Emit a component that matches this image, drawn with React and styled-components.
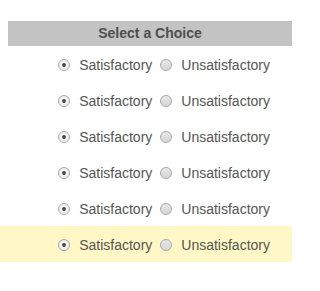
import React, { useState } from "react";
import styled, { createGlobalStyle } from "styled-components";

const GlobalStyle = createGlobalStyle`
  body {
    margin: 0;
    background: #ffffff;
    font-family: "Liberation Sans", Arial, sans-serif;
  }
  * {
    box-sizing: border-box;
  }
`;

const ROWS = [0, 1, 2, 3, 4, 5];

function App() {
  const [choices, setChoices] = useState(ROWS.map(() => "sat"));

  const pick = (i, value) =>
    setChoices((prev) => prev.map((c, j) => (j === i ? value : c)));

  return (
    <Page>
      <GlobalStyle />
      <Header>Select a Choice</Header>
      {ROWS.map((i) => (
        <Row key={i} highlighted={i === ROWS.length - 1}>
          <Option onClick={() => pick(i, "sat")}>
            <Radio checked={choices[i] === "sat"} />
            <Label>Satisfactory</Label>
          </Option>
          <Option onClick={() => pick(i, "unsat")}>
            <Radio checked={choices[i] === "unsat"} />
            <Label>Unsatisfactory</Label>
          </Option>
        </Row>
      ))}
    </Page>
  );
}

export default App;

const Page = styled.div`
  width: 292px;
  padding-top: 21px;
`;

const Header = styled.div`
  margin-left: 8px;
  height: 25px;
  line-height: 25px;
  background-color: #c3c3c3;
  color: #4f4f4f;
  font-size: 14px;
  font-weight: bold;
  text-align: center;
`;

const Row = styled.div.withConfig({
  shouldForwardProp: (prop) => prop !== "highlighted",
})`
  display: flex;
  align-items: center;
  justify-content: flex-end;
  gap: 8px;
  height: 36px;
  padding: 2px 22px 0 0;
  background-color: ${(p) => (p.highlighted ? "#fff8c6" : "transparent")};
`;

const Option = styled.label`
  display: flex;
  align-items: center;
  gap: 9px;
  cursor: pointer;
`;

const Radio = styled.span.withConfig({
  shouldForwardProp: (prop) => prop !== "checked",
})`
  position: relative;
  width: 12px;
  height: 12px;
  border-radius: 50%;
  border: 1px solid #a9a9a9;
  background: ${(p) =>
    p.checked
      ? "radial-gradient(circle, #ffffff 0%, #e4e4e4 100%)"
      : "linear-gradient(#e6e6e6, #d6d6d6)"};
  &::after {
    content: "";
    display: ${(p) => (p.checked ? "block" : "none")};
    position: absolute;
    left: 3px;
    top: 3px;
    width: 4px;
    height: 4px;
    border-radius: 50%;
    background: #4a4a4a;
  }
`;

const Label = styled.span`
  font-size: 14px;
  color: #555555;
  line-height: 16px;
`;
